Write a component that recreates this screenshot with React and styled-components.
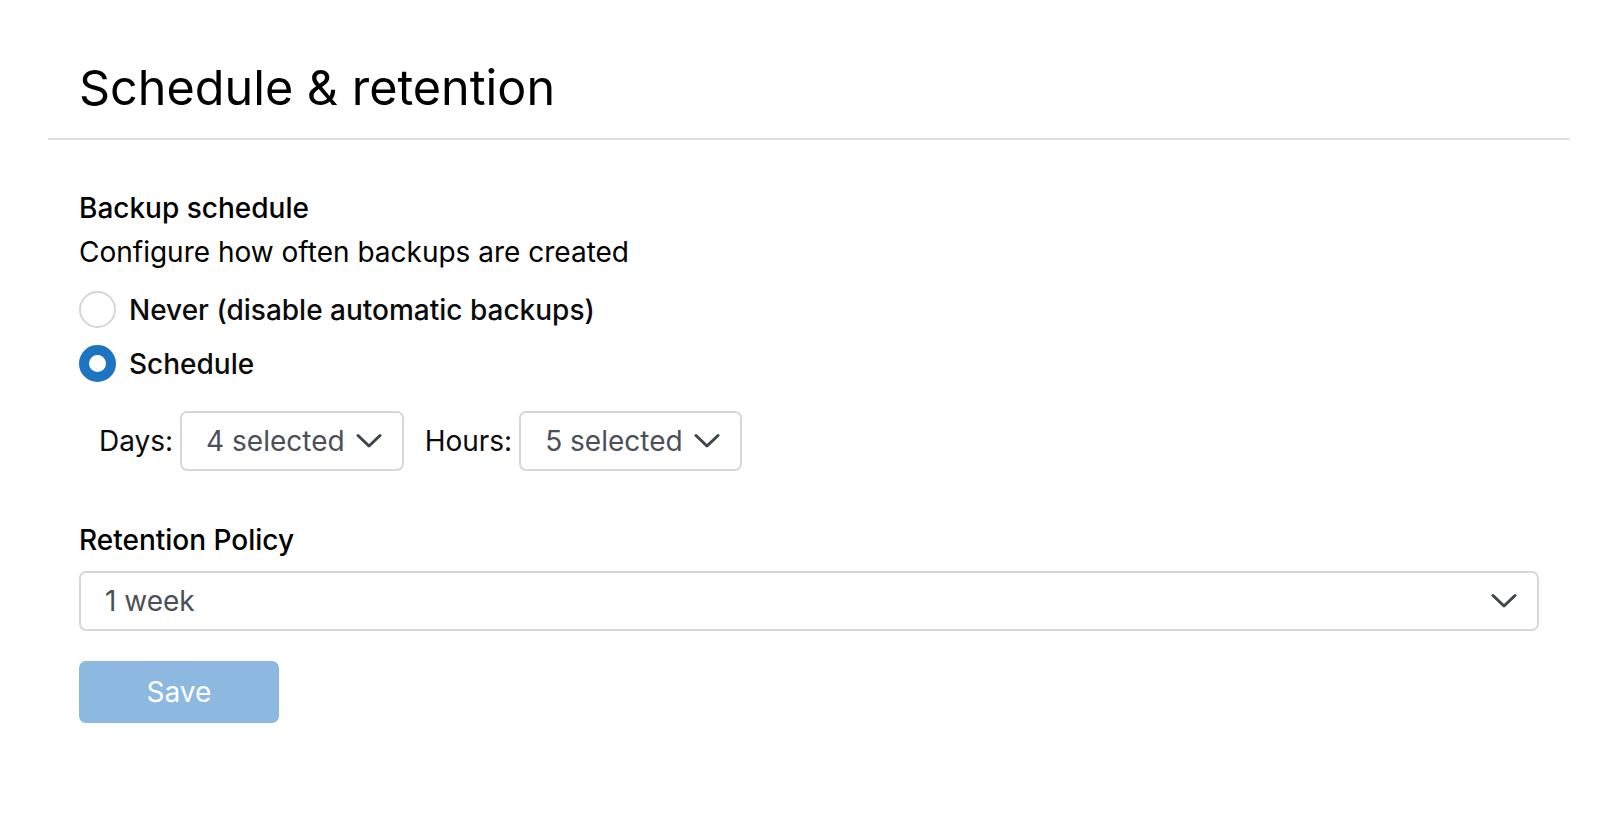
import React, { useState } from "react";
import styled, { createGlobalStyle } from "styled-components";

const GlobalStyle = createGlobalStyle`
  body {
    margin: 0;
    background: #ffffff;
    font-family: Inter, "Noto Sans", sans-serif;
    color: #0b0b0c;
  }
`;

const Page = styled.div`
  padding: 0 48px;
`;

const Header = styled.header`
  padding: 59px 31px 21px;
  border-bottom: 2px solid #dcdfe4;
`;

const Title = styled.h1`
  margin: 0;
  font-size: 48.5px;
  line-height: 58px;
  font-weight: 400;
  color: #000;
`;

const Body = styled.div`
  padding: 48px 31px 0;
  display: flex;
  flex-direction: column;
`;

const Label = styled.div`
  font-size: 28px;
  line-height: 40px;
  font-weight: 500;
  color: #000;
`;

const Hint = styled.div`
  font-size: 28px;
  line-height: 40px;
  margin-top: 4px;
  color: #000;
`;

const RadioList = styled.div`
  display: flex;
  flex-direction: column;
  gap: 17px;
  margin-top: 19px;
`;

const RadioRow = styled.label`
  display: flex;
  align-items: center;
  gap: 13px;
  font-size: 28px;
  font-weight: 500;
  cursor: pointer;
`;

const RadioDot = styled.span`
  box-sizing: border-box;
  width: 37px;
  height: 37px;
  border-radius: 50%;
  background: #fff;
  border: ${(p) => (p.$checked ? "10px solid #1d74c1" : "2px solid #d3d7dc")};
  flex-shrink: 0;
`;

const ScheduleRow = styled.div`
  display: flex;
  align-items: center;
  margin-top: 29px;
  padding-left: 20px;
  font-size: 28px;
`;

const Field = styled.div`
  display: flex;
  align-items: center;
  gap: 7px;
  margin-right: 21px;
`;

const SelectBox = styled.button`
  box-sizing: border-box;
  display: flex;
  align-items: center;
  justify-content: ${(p) => (p.$wide ? "space-between" : "flex-start")};
  gap: 11px;
  width: ${(p) => (p.$wide ? "100%" : "auto")};
  height: 60px;
  padding: 0 20px 0 24px;
  border: 2px solid #d5d9de;
  border-radius: 7px;
  background: #fff;
  font-family: inherit;
  font-size: 28px;
  color: #4a5059;
  cursor: pointer;
`;

const Section = styled.div`
  margin-top: 49px;
`;

const RetentionSelect = styled.div`
  margin-top: 11px;
`;

const SaveButton = styled.button`
  margin-top: 30px;
  width: 200px;
  height: 62px;
  border: none;
  border-radius: 7px;
  background: #8db9e0;
  color: #fff;
  font-family: inherit;
  font-size: 28px;
  cursor: default;
`;

const Chevron = () => (
  <svg width="26" height="16" viewBox="0 0 26 16" fill="none">
    <polyline
      points="2,2.5 13,13 24,2.5"
      stroke="#3f454d"
      strokeWidth="3"
      strokeLinecap="round"
      strokeLinejoin="round"
    />
  </svg>
);

export default function App() {
  const [mode, setMode] = useState("schedule");

  return (
    <Page>
      <GlobalStyle />
      <Header>
        <Title>Schedule &amp; retention</Title>
      </Header>
      <Body>
        <Label>Backup schedule</Label>
        <Hint>Configure how often backups are created</Hint>
        <RadioList>
          <RadioRow onClick={() => setMode("never")}>
            <RadioDot $checked={mode === "never"} />
            Never (disable automatic backups)
          </RadioRow>
          <RadioRow onClick={() => setMode("schedule")}>
            <RadioDot $checked={mode === "schedule"} />
            Schedule
          </RadioRow>
        </RadioList>
        <ScheduleRow>
          <Field>
            Days:
            <SelectBox>
              4 selected
              <Chevron />
            </SelectBox>
          </Field>
          <Field>
            Hours:
            <SelectBox>
              5 selected
              <Chevron />
            </SelectBox>
          </Field>
        </ScheduleRow>
        <Section>
          <Label>Retention Policy</Label>
          <RetentionSelect>
            <SelectBox $wide>
              1 week
              <Chevron />
            </SelectBox>
          </RetentionSelect>
        </Section>
        <div>
          <SaveButton disabled>Save</SaveButton>
        </div>
      </Body>
    </Page>
  );
}
